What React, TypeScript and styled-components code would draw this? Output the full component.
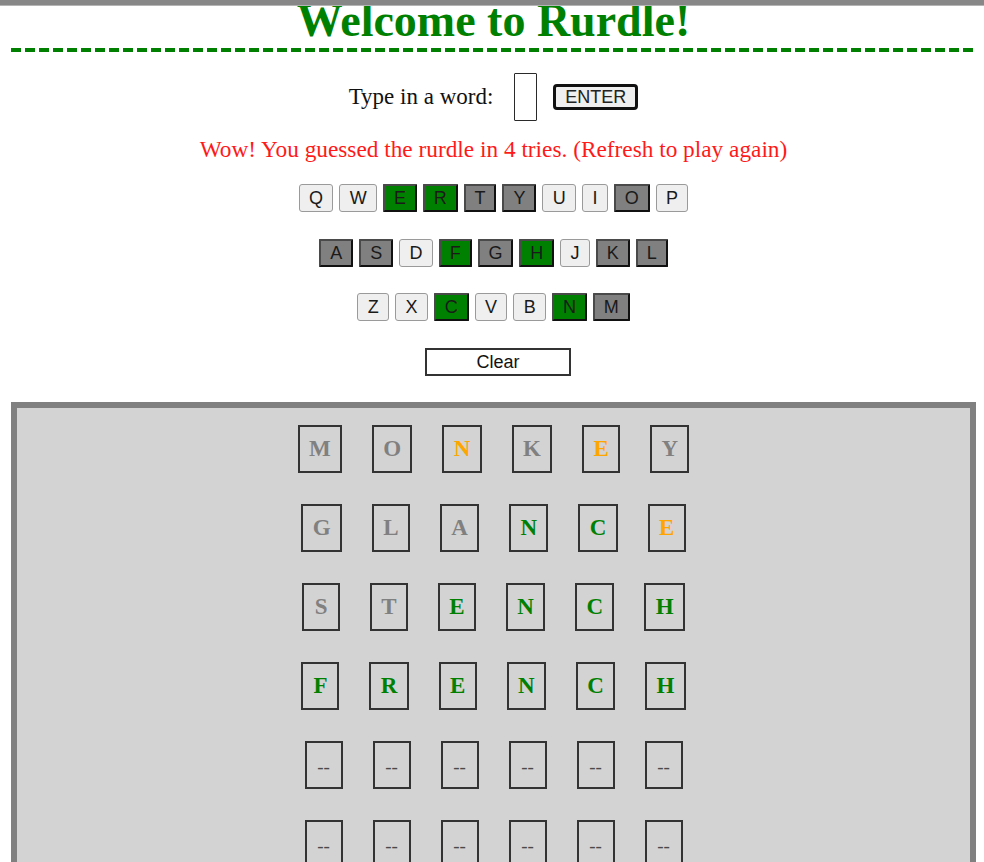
import React from "react";
import styled, { createGlobalStyle, css } from "styled-components";

const Global = createGlobalStyle`
  html, body { margin: 0; padding: 0; background: #ffffff; }
  body { font-family: "Liberation Serif", "Times New Roman", serif; }
`;

const TopBar = styled.div`
  position: relative;
  z-index: 1;
  height: 5px;
  background: #878787;
  border-bottom: 1px solid #b4b4b4;
`;

const Page = styled.div`
  margin: -1px 8px 0 11px;
`;

const Title = styled.h1`
  margin: 0;
  padding-bottom: 12px;
  font-family: "Liberation Serif", "Times New Roman", serif;
  font-weight: bold;
  font-size: 46px;
  line-height: 31px;
  color: #008000;
  text-align: center;
  &::after {
    content: "";
    display: block;
    height: 4px;
    margin-top: 12px;
    background: repeating-linear-gradient(90deg, #008000 0 10px, transparent 10px 14px);
  }
`;

const InputRow = styled.div`
  margin-top: 9px;
  display: flex;
  justify-content: center;
  align-items: center;
`;

const Label = styled.span`
  font-size: 23px;
  color: #111;
  margin-right: 21px;
`;

const WordInput = styled.input`
  box-sizing: border-box;
  width: 23px;
  height: 48px;
  padding: 0;
  border: 1.5px solid #2a2a2a;
  border-radius: 1px;
  background: #fff;
  margin: 0 16px 0 0;
`;

const EnterButton = styled.button`
  box-sizing: border-box;
  height: 26px;
  padding: 0 9px;
  border: 3px solid #111;
  border-radius: 4px;
  background: #efefef;
  font-family: "Liberation Sans", Arial, sans-serif;
  font-size: 18px;
  line-height: 18px;
  color: #222;
`;

const Message = styled.p`
  margin: 15px 0 0;
  font-size: 23.3px;
  line-height: 26px;
  color: #ff1a1a;
  text-align: center;
`;

const Keyboard = styled.div`
  margin-top: 22px;
  display: flex;
  flex-direction: column;
  align-items: center;
  gap: 26.5px;
`;

const KeyRow = styled.div`
  display: flex;
  justify-content: center;
  gap: 6px;
`;

type KeyState = "unused" | "hit" | "miss";

const Key = styled.button<{ $state: KeyState }>`
  box-sizing: border-box;
  height: 28px;
  padding: 0 8.9px;
  font-family: "Liberation Sans", Arial, sans-serif;
  font-size: 18px;
  line-height: 18px;
  color: #1a1a1a;
  ${({ $state }) =>
    $state === "unused"
      ? css`
          background: #efefef;
          border: 1.5px solid #9a9a9a;
          border-radius: 3px;
          padding: 0 9.4px;
        `
      : css`
          background: ${$state === "hit" ? "#008000" : "#808080"};
          border: 2px solid;
          border-color: #4a4a4a #111 #111 #4a4a4a;
          border-radius: 1px;
        `}
`;

const ClearButton = styled.button`
  box-sizing: border-box;
  width: 146px;
  height: 28px;
  margin-left: 9px;
  border: 2px solid #333;
  background: #fff;
  font-family: "Liberation Sans", Arial, sans-serif;
  font-size: 18px;
  line-height: 18px;
  color: #111;
`;

const Board = styled.div`
  margin-top: 26.5px;
  border: 6px solid #808080;
  background: #d3d3d3;
  padding: 17px 0 17px;
  display: flex;
  flex-direction: column;
  align-items: center;
  gap: 31px;
`;

const TileRow = styled.div`
  display: flex;
  justify-content: center;
  gap: 30px;
`;

type TileState = "absent" | "present" | "correct" | "empty";

const tileColor: Record<TileState, string> = {
  absent: "#808080",
  present: "#ffa500",
  correct: "#008000",
  empty: "#4a4a4a",
};

const Tile = styled.div<{ $state: TileState }>`
  box-sizing: border-box;
  height: 48px;
  min-width: 38px;
  padding: 0 9.3px;
  border: 2px solid #333;
  display: flex;
  align-items: center;
  justify-content: center;
  font-family: "Liberation Serif", "Times New Roman", serif;
  font-size: ${({ $state }) => ($state === "empty" ? "19px" : "23px")};
  font-weight: ${({ $state }) => ($state === "empty" ? "normal" : "bold")};
  color: ${({ $state }) => tileColor[$state]};
  ${({ $state }) => $state === "empty" && css`padding-top: 4px;`}
`;

const keyRows: [string, KeyState][][] = [
  [
    ["Q", "unused"], ["W", "unused"], ["E", "hit"], ["R", "hit"], ["T", "miss"],
    ["Y", "miss"], ["U", "unused"], ["I", "unused"], ["O", "miss"], ["P", "unused"],
  ],
  [
    ["A", "miss"], ["S", "miss"], ["D", "unused"], ["F", "hit"], ["G", "miss"],
    ["H", "hit"], ["J", "unused"], ["K", "miss"], ["L", "miss"],
  ],
  [
    ["Z", "unused"], ["X", "unused"], ["C", "hit"], ["V", "unused"], ["B", "unused"],
    ["N", "hit"], ["M", "miss"],
  ],
];

const A: TileState = "absent";
const P: TileState = "present";
const C: TileState = "correct";

const guesses: { word: string; states: TileState[] }[] = [
  { word: "MONKEY", states: [A, A, P, A, P, A] },
  { word: "GLANCE", states: [A, A, A, C, C, P] },
  { word: "STENCH", states: [A, A, C, C, C, C] },
  { word: "FRENCH", states: [C, C, C, C, C, C] },
];

const EMPTY_ROWS = 2;

export default function App() {
  return (
    <>
      <Global />
      <TopBar />
      <Page>
        <Title>Welcome to Rurdle!</Title>
        <InputRow>
          <Label>Type in a word:</Label>
          <WordInput type="text" />
          <EnterButton>ENTER</EnterButton>
        </InputRow>
        <Message>Wow! You guessed the rurdle in 4 tries. (Refresh to play again)</Message>
        <Keyboard>
          {keyRows.map((row, i) => (
            <KeyRow key={i}>
              {row.map(([letter, state]) => (
                <Key key={letter} $state={state}>
                  {letter}
                </Key>
              ))}
            </KeyRow>
          ))}
          <ClearButton>Clear</ClearButton>
        </Keyboard>
        <Board>
          {guesses.map((g, r) => (
            <TileRow key={r}>
              {g.word.split("").map((ch, c) => (
                <Tile key={c} $state={g.states[c]}>
                  {ch}
                </Tile>
              ))}
            </TileRow>
          ))}
          {Array.from({ length: EMPTY_ROWS }).map((_, r) => (
            <TileRow key={`e${r}`}>
              {Array.from({ length: 6 }).map((__, c) => (
                <Tile key={c} $state="empty">
                  --
                </Tile>
              ))}
            </TileRow>
          ))}
        </Board>
      </Page>
    </>
  );
}
